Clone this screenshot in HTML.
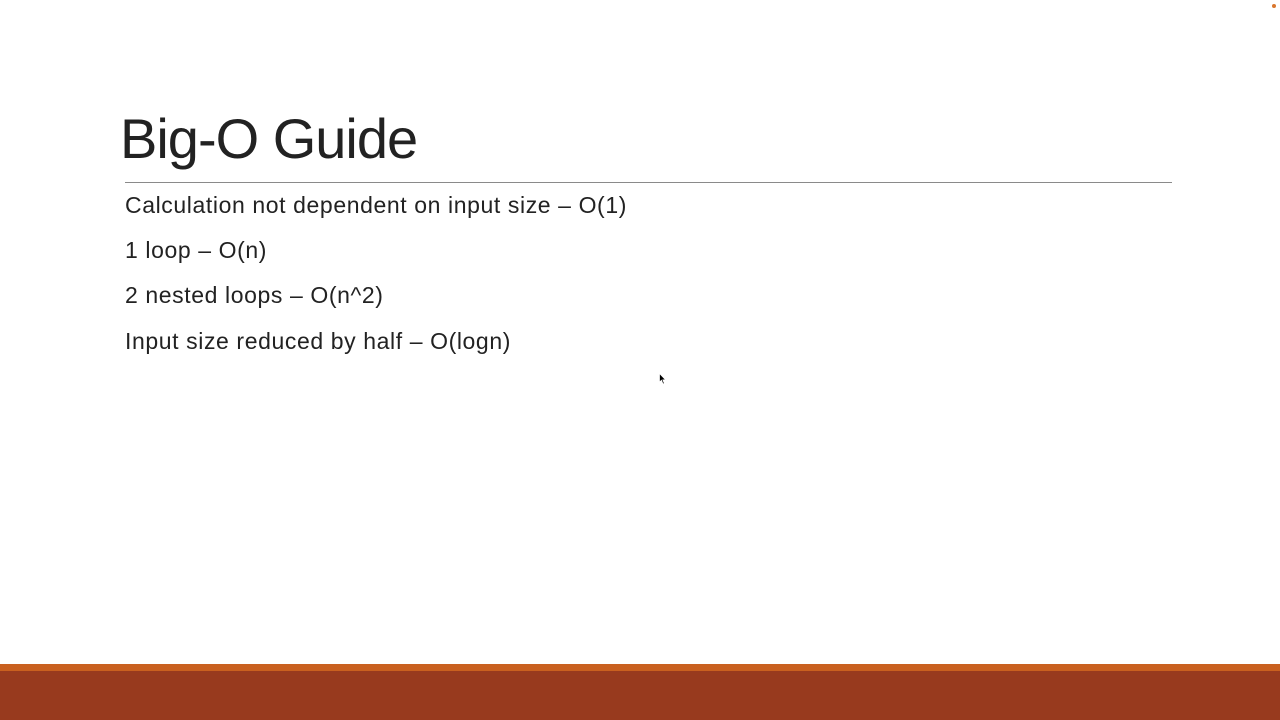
<!DOCTYPE html>
<html><head><style>
body{margin:0;width:1280px;height:720px;background:#fff;position:relative;overflow:hidden;font-family:"Liberation Sans",sans-serif;color:#222}
.t{position:absolute;left:120px;top:106px;font-size:56px;letter-spacing:-1px;white-space:nowrap}
.hr{position:absolute;left:125px;top:182px;width:1047px;height:1px;background:#8a8a8a}
.l{position:absolute;left:125px;font-size:23px;letter-spacing:0.6px;white-space:nowrap}
.b1{position:absolute;left:0;top:664px;width:1280px;height:7px;background:#c9601f}
.b2{position:absolute;left:0;top:671px;width:1280px;height:49px;background:#983a1e}
.dot{position:absolute;left:1272px;top:4px;width:4px;height:4px;border-radius:2px;background:#d9772e}
</style></head><body>
<div class="dot"></div>
<div class="t">Big-O Guide</div>
<div class="hr"></div>
<div class="l" style="top:192px">Calculation not dependent on input size – O(1)</div>
<div class="l" style="top:237px">1 loop – O(n)</div>
<div class="l" style="top:282px">2 nested loops – O(n^2)</div>
<div class="l" style="top:328px">Input size reduced by half – O(logn)</div>
<svg style="position:absolute;left:659px;top:373px" width="8" height="12" viewBox="0 0 8 12"><path d="M0.5 0.5 L0.5 9 L2.5 7.2 L4 11 L5.3 10.4 L3.8 6.8 L6.5 6.8 Z" fill="#000" stroke="#fff" stroke-width="0.7"/></svg>
<div class="b1"></div><div class="b2"></div>
</body></html>
